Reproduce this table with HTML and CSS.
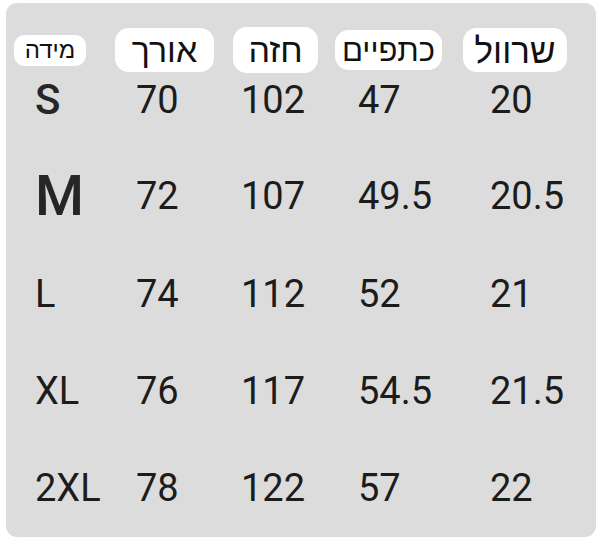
FILE: index.html
```html
<!DOCTYPE html>
<html lang="he">
<head>
<meta charset="utf-8">
<title>טבלת מידות</title>
<link rel="stylesheet" href="styles.css">
</head>
<body>
<div class="card">
  <div class="row head">
    <div class="cell c1"><span class="pill p1" dir="rtl">מידה</span></div>
    <div class="cell c2"><span class="pill p2" dir="rtl">אורך</span></div>
    <div class="cell c3"><span class="pill p3" dir="rtl">חזה</span></div>
    <div class="cell c4"><span class="pill p4" dir="rtl">כתפיים</span></div>
    <div class="cell c5"><span class="pill p5" dir="rtl">שרוול</span></div>
  </div>
  <div class="row first">
    <div class="cell c1 v"><span class="size s-s">S</span></div>
    <div class="cell c2 v">70</div>
    <div class="cell c3 v">102</div>
    <div class="cell c4 v">47</div>
    <div class="cell c5 v">20</div>
  </div>
  <div class="row">
    <div class="cell c1 v"><span class="size s-m">M</span></div>
    <div class="cell c2 v">72</div>
    <div class="cell c3 v">107</div>
    <div class="cell c4 v">49.5</div>
    <div class="cell c5 v">20.5</div>
  </div>
  <div class="row">
    <div class="cell c1 v">L</div>
    <div class="cell c2 v">74</div>
    <div class="cell c3 v">112</div>
    <div class="cell c4 v">52</div>
    <div class="cell c5 v">21</div>
  </div>
  <div class="row">
    <div class="cell c1 v">XL</div>
    <div class="cell c2 v">76</div>
    <div class="cell c3 v">117</div>
    <div class="cell c4 v">54.5</div>
    <div class="cell c5 v">21.5</div>
  </div>
  <div class="row">
    <div class="cell c1 v">2XL</div>
    <div class="cell c2 v">78</div>
    <div class="cell c3 v">122</div>
    <div class="cell c4 v">57</div>
    <div class="cell c5 v">22</div>
  </div>
</div>
</body>
</html>
```
FILE: styles.css
```css
html, body {
  margin: 0;
  padding: 0;
  background: #ffffff;
}

body {
  font-family: Roboto, "Liberation Sans", sans-serif;
  color: #1c1c1c;
}

.card {
  margin: 3px 4px 3px 6px;
  height: 534px;
  box-sizing: border-box;
  padding-top: 24px;
  background: #dcdcdc;
  border-radius: 11px;
  overflow: hidden;
  display: flex;
  flex-direction: column;
}

.row {
  display: grid;
  grid-template-columns: 94px 124px 104px 127px 1fr;
  height: 98px;
  align-items: center;
}

.row.head {
  height: 46px;
}

.row.first {
  height: 75px;
  align-items: start;
}

.row.first .cell {
  height: 54px;
  line-height: 54px;
}

.cell {
  display: flex;
  align-items: center;
}

.v {
  font-size: 38px;
  line-height: 1;
  font-weight: 400;
}

.head .c1 { padding-left: 8px; }
.head .c2 { padding-left: 15px; }
.head .c3 { padding-left: 9px; }
.head .c4 { padding-left: 7px; }
.head .c5 { padding-left: 8px; }

.v.c1 { padding-left: 29px; }
.v.c2 { padding-left: 36px; }
.v.c3 { padding-left: 17px; }
.v.c4 { padding-left: 30px; }
.v.c5 { padding-left: 35px; }

.pill {
  display: flex;
  align-items: center;
  justify-content: center;
  background: #ffffff;
  border-radius: 14px;
  font-family: "Liberation Sans", Arial, sans-serif;
  color: #111111;
  line-height: 1;
}

.p1 { width: 72px; height: 31px; font-size: 24px; border-radius: 11px; }
.p2 { width: 99px; height: 44px; font-size: 34px; }
.p3 { width: 85px; height: 46px; font-size: 34px; }
.p4 { width: 107px; height: 40px; font-size: 31px; }
.p5 { width: 104px; height: 44px; font-size: 35px; }

.size {
  font-weight: 500;
  color: #262626;
}

.s-s { font-size: 42px; }
.s-m { font-size: 56px; }
```
